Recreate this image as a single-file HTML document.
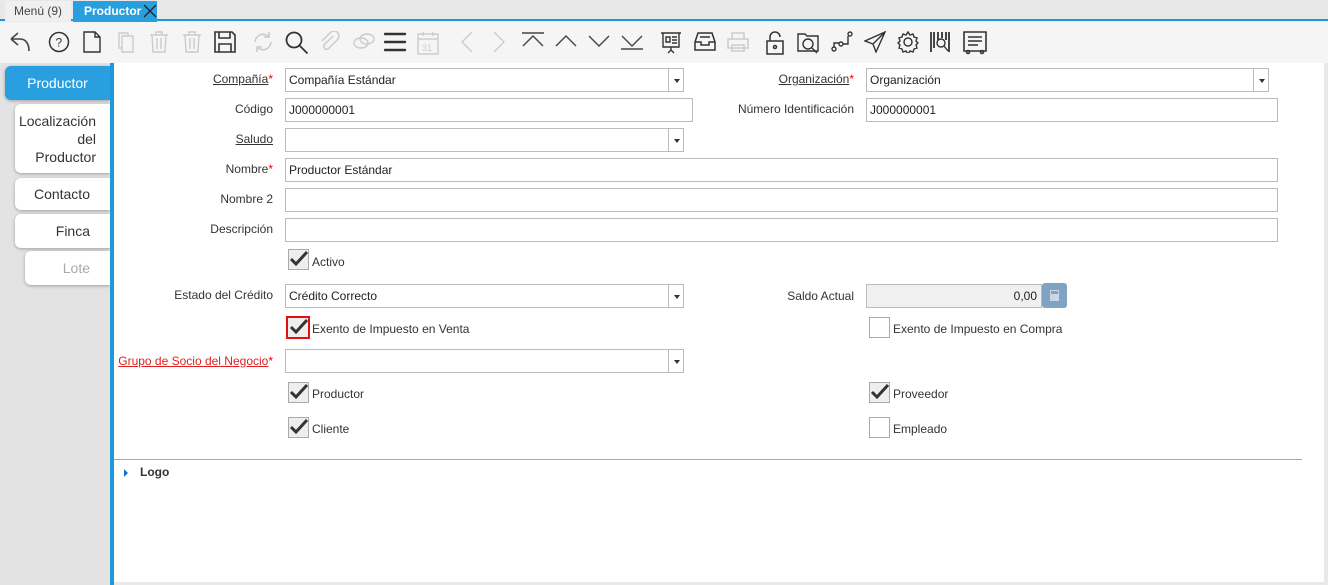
<!DOCTYPE html>
<html><head><meta charset="utf-8"><style>
*{box-sizing:border-box;margin:0;padding:0}
body{width:1328px;height:585px;overflow:hidden;background:#e9e9e9;font-family:"Liberation Sans","DejaVu Sans",sans-serif;font-size:12px;color:#333;position:relative}
.abs{position:absolute}
.tabbar{left:0;top:0;width:1328px;height:21px;background:#e8e8e8;border-bottom:2px solid #2196d8}
.t1{left:5px;top:1px;width:66px;height:20px;background:#f0f0f0;color:#444;font-size:12px;text-align:center;line-height:20px}
.t2{left:73px;top:1px;width:84px;height:21px;background:#2a9fe0;color:#fff;font-weight:bold;font-size:12px;line-height:20px;padding-left:11px}
.tb{left:0;top:22px;width:1328px;height:41px;background:#f5f5f5}
.side{left:0;top:63px;width:110px;height:522px;background:#e3e3e3}
.bl{left:110px;top:63px;width:4px;height:522px;background:#1e98dc}
.main{left:114px;top:63px;width:1210px;height:519px;background:#fff}
.vt{background:#fff;border-radius:6px 0 0 6px;box-shadow:0 1px 3px rgba(0,0,0,.3);font-size:14px;color:#333;text-align:right;padding-right:20px}
.lbl{text-align:right;font-size:12px;color:#333;white-space:nowrap}
.u{text-decoration:underline}
.req{color:#e00}
.in{background:#fff;border:1px solid #bbb;height:24px;line-height:22px;padding-left:3px;font-size:12px;color:#222}
.dd{border:1px solid #bbb;background:#fff;width:16px;height:24px}
.dd:after{content:"";position:absolute;left:5px;top:10px;border:3px solid transparent;border-top:4px solid #333}
.cb{width:21px;height:21px;border:1px solid #aaa;background:#eee}
.ck{font-size:12px}
svg.i{position:absolute;top:31px}
svg.tk{position:absolute}
</style></head><body>
<div class="abs tabbar"></div>
<div class="abs t1">Menú (9)</div>
<div class="abs t2">Productor<svg style="position:absolute;left:70px;top:3px" width="14" height="14" stroke="#222" stroke-width="1.3"><path d="M1 1l12 12M13 1L1 13"/></svg></div>
<div class="abs tb"></div>
<svg class="i" style="left:8px" width="24" height="24" fill="none" stroke="#444" stroke-width="1.6"><path d="M3 8l7-6M3 8l7 6M3 8h9c6 0 9 5 9 12"/></svg>
<svg class="i" style="left:48px" width="22" height="22" fill="none" stroke="#333" stroke-width="1.5"><circle cx="11" cy="11" r="9.5"/><text x="7.5" y="15.5" font-size="12" fill="#333" stroke="none">?</text></svg>
<svg class="i" style="left:83px" width="18" height="22" fill="none" stroke="#333" stroke-width="1.4"><path d="M1 1h11l5 5v15H1z M12 1v5h5"/></svg>
<svg class="i" style="left:116px" width="20" height="22" fill="none" stroke="#ccc" stroke-width="1.4"><path d="M6 5h11v16H6z M3 2h9v3M3 2v15h3"/></svg>
<svg class="i" style="left:149px" width="20" height="22" fill="none" stroke="#ccc" stroke-width="1.4"><path d="M1 4h18M7 4V1h6v3M3 4l1 17h12l1-17M8 7v11M12 7v11"/></svg>
<svg class="i" style="left:182px" width="20" height="22" fill="none" stroke="#ccc" stroke-width="1.4"><path d="M1 4h18M7 4V1h6v3M3 4l1 17h12l1-17M8 7v11M12 7v11"/></svg>
<svg class="i" style="left:214px" width="22" height="22" fill="none" stroke="#333" stroke-width="1.6"><path d="M1 1h17l3 3v17H1z M5 1v6h11V1 M5 13h12v8H5z"/></svg>
<svg class="i" style="left:252px" width="22" height="22" fill="none" stroke="#ccc" stroke-width="1.6"><path d="M3 11a8 8 0 0 1 14-5M19 11a8 8 0 0 1-14 5M17 1v5h-5M5 21v-5h5"/></svg>
<svg class="i" style="left:285px" width="24" height="24" fill="none" stroke="#333" stroke-width="1.8"><circle cx="9" cy="9" r="7.5"/><path d="M14.5 14.5l8 8"/></svg>
<svg class="i" style="left:319px" width="22" height="22" fill="none" stroke="#ccc" stroke-width="1.5"><path d="M14 5l-9 9a3 3 0 0 0 4 4l10-10a5 5 0 0 0-7-7L3 10"/></svg>
<svg class="i" style="left:352px" width="24" height="22" fill="none" stroke="#ccc" stroke-width="1.4"><ellipse cx="9" cy="12" rx="7" ry="5"/><ellipse cx="15" cy="8" rx="7" ry="5"/></svg>
<svg class="i" style="left:383px" width="24" height="22" fill="none" stroke="#333" stroke-width="2.4"><path d="M2 3h20M2 11h20M2 19h20" stroke-linecap="round"/></svg>
<svg class="i" style="left:417px" width="22" height="24" fill="none" stroke="#ccc" stroke-width="1.4"><path d="M1 3h20v20H1zM1 8h20M6 1v4M16 1v4"/><text x="5" y="20" font-size="9" fill="#ccc" stroke="none">31</text></svg>
<svg class="i" style="left:460px" width="14" height="22" fill="none" stroke="#ccc" stroke-width="1.4"><path d="M12 1L2 11l10 10"/></svg>
<svg class="i" style="left:492px" width="14" height="22" fill="none" stroke="#ccc" stroke-width="1.4"><path d="M2 1l10 10L2 21"/></svg>
<svg class="i" style="left:522px" width="22" height="20" fill="none" stroke="#444" stroke-width="1.4"><path d="M0 2h22M1 15l10-10 10 10"/></svg>
<svg class="i" style="left:555px" width="22" height="20" fill="none" stroke="#444" stroke-width="1.4"><path d="M1 15l10-10 10 10"/></svg>
<svg class="i" style="left:588px" width="22" height="20" fill="none" stroke="#444" stroke-width="1.4"><path d="M1 5l10 10 10-10"/></svg>
<svg class="i" style="left:621px" width="22" height="20" fill="none" stroke="#444" stroke-width="1.4"><path d="M1 5l10 10 10-10M0 18h22"/></svg>
<svg class="i" style="left:660px" width="22" height="24" fill="none" stroke="#333" stroke-width="1.4"><path d="M1 2h20M3 2v14h16V2M6 6h4v5H6zM12 6h5M12 9h5M12 12h5M11 16v4M8 22l3-3 3 3"/></svg>
<svg class="i" style="left:694px" width="22" height="22" fill="none" stroke="#333" stroke-width="1.5"><path d="M4 2h14l3 9v8H1v-8zM1 11h6v3h8v-3h6M6 6h10"/></svg>
<svg class="i" style="left:727px" width="22" height="22" fill="none" stroke="#ccc" stroke-width="1.5"><path d="M5 8V2h12v6M1 8h20v9H1zM5 14h12v6H5z"/></svg>
<svg class="i" style="left:766px" width="18" height="24" fill="none" stroke="#333" stroke-width="1.5"><path d="M4 10V6a5 5 0 0 1 10 0M1 10h16v13H1z"/><circle cx="9" cy="16" r="1.5"/></svg>
<svg class="i" style="left:797px" width="24" height="24" fill="none" stroke="#333" stroke-width="1.4"><path d="M1 3h7l2 2h11v15H1z"/><circle cx="11" cy="13" r="5"/><path d="M15 17l5 5"/></svg>
<svg class="i" style="left:831px" width="22" height="22" fill="none" stroke="#333" stroke-width="1.4"><circle cx="3" cy="18" r="2"/><circle cx="10" cy="13" r="2"/><circle cx="19" cy="3" r="2"/><path d="M3 16v-4h5M12 13h5V5"/></svg>
<svg class="i" style="left:864px" width="22" height="22" fill="none" stroke="#333" stroke-width="1.4"><path d="M21 1L1 10l8 3 3 8zM21 1L9 13"/></svg>
<svg class="i" style="left:897px" width="22" height="22" fill="none" stroke="#333" stroke-width="1.4"><circle cx="11" cy="11" r="4"/><path d="M11 1l2 3 3-1 1 3 3 1-1 3 2 2-2 2 1 3-3 1-1 3-3-1-2 3-2-3-3 1-1-3-3-1 1-3-2-2 2-2-1-3 3-1 1-3 3 1z"/></svg>
<svg class="i" style="left:930px" width="22" height="22" fill="none" stroke="#333" stroke-width="1.8"><path d="M1 1v20M4 1v16M8 1v8M12 1v6M16 1v8M19 1v20"/><circle cx="11" cy="12" r="4" stroke-width="1.4"/><path d="M14 15l4 5" stroke-width="1.4"/></svg>
<svg class="i" style="left:963px" width="24" height="24" fill="none" stroke="#333" stroke-width="1.6"><path d="M1 1h22v19H1zM5 6h14M5 10h14M5 14h10"/><circle cx="5" cy="21" r="1.5"/><circle cx="19" cy="21" r="1.5"/></svg>

<div class="abs side"></div>
<div class="abs vt" style="left:5px;top:66px;width:105px;height:34px;background:#2a9fe0;color:#fff;line-height:34px;text-align:center;padding:0;font-size:14px">Productor</div>
<div class="abs vt" style="left:15px;top:104px;width:95px;height:69px;line-height:18px;padding-top:8px;padding-right:14px">Localización<br>del<br>Productor</div>
<div class="abs vt" style="left:15px;top:178px;width:95px;height:32px;line-height:32px">Contacto</div>
<div class="abs vt" style="left:15px;top:214px;width:95px;height:34px;line-height:34px">Finca</div>
<div class="abs vt" style="left:25px;top:251px;width:85px;height:34px;line-height:34px;color:#aaa">Lote</div>
<div class="abs bl"></div>
<div class="abs main"></div>

<div class="abs lbl" style="left:120px;top:72px;width:153px"><span class="u">Compañía</span><span class="req">*</span></div>
<div class="abs in" style="left:285px;top:68px;width:384px">Compañía Estándar</div><div class="abs dd" style="left:668px;top:68px"></div>
<div class="abs lbl" style="left:700px;top:72px;width:154px"><span class="u">Organización</span><span class="req">*</span></div>
<div class="abs in" style="left:866px;top:68px;width:388px">Organización</div><div class="abs dd" style="left:1253px;top:68px"></div>

<div class="abs lbl" style="left:120px;top:102px;width:153px">Código</div>
<div class="abs in" style="left:285px;top:98px;width:408px">J000000001</div>
<div class="abs lbl" style="left:700px;top:102px;width:154px">Número Identificación</div>
<div class="abs in" style="left:866px;top:98px;width:412px">J000000001</div>

<div class="abs lbl" style="left:120px;top:132px;width:153px"><span class="u">Saludo</span></div>
<div class="abs in" style="left:285px;top:128px;width:384px"></div><div class="abs dd" style="left:668px;top:128px"></div>

<div class="abs lbl" style="left:120px;top:162px;width:153px">Nombre<span class="req">*</span></div>
<div class="abs in" style="left:285px;top:158px;width:993px">Productor Estándar</div>
<div class="abs lbl" style="left:120px;top:192px;width:153px">Nombre 2</div>
<div class="abs in" style="left:285px;top:188px;width:993px"></div>
<div class="abs lbl" style="left:120px;top:222px;width:153px">Descripción</div>
<div class="abs in" style="left:285px;top:218px;width:993px"></div>

<div class="abs cb" style="left:288px;top:249px"></div><svg class="tk" style="left:288px;top:249px" width="21" height="21"><path d="M3 10l5 5L19 3" fill="none" stroke="#333" stroke-width="3"/></svg><div class="abs ck" style="left:312px;top:255px">Activo</div>

<div class="abs lbl" style="left:120px;top:288px;width:153px">Estado del Crédito</div>
<div class="abs in" style="left:285px;top:284px;width:384px">Crédito Correcto</div><div class="abs dd" style="left:668px;top:284px"></div>
<div class="abs lbl" style="left:700px;top:289px;width:154px">Saldo Actual</div>
<div class="abs in" style="left:866px;top:284px;width:176px;background:#f0f0f0;text-align:right;padding-right:4px">0,00</div>
<div class="abs" style="left:1042px;top:283px;width:25px;height:25px;background:#7fa3c2;border-radius:3px"><div style="position:absolute;left:8px;top:7px;width:9px;height:11px;background:#c9d8e6"></div><div style="position:absolute;left:9px;top:8px;width:7px;height:3px;background:#7fa3c2"></div></div>

<div class="abs" style="left:286px;top:316px;width:24px;height:23px;border:2px solid #e01010"></div>
<div class="abs cb" style="left:288px;top:318px;width:20px;height:19px;border:none"></div><svg class="tk" style="left:288px;top:317px" width="21" height="21"><path d="M3 10l5 5L19 3" fill="none" stroke="#333" stroke-width="3"/></svg><div class="abs ck" style="left:312px;top:322px">Exento de Impuesto en Venta</div>
<div class="abs cb" style="left:869px;top:317px;background:#fff"></div><div class="abs ck" style="left:893px;top:322px">Exento de Impuesto en Compra</div>

<div class="abs lbl" style="left:80px;top:354px;width:193px;color:#e02020"><span class="u">Grupo de Socio del Negocio</span><span class="req">*</span></div>
<div class="abs in" style="left:285px;top:349px;width:384px"></div><div class="abs dd" style="left:668px;top:349px"></div>

<div class="abs cb" style="left:288px;top:382px"></div><svg class="tk" style="left:288px;top:382px" width="21" height="21"><path d="M3 10l5 5L19 3" fill="none" stroke="#333" stroke-width="3"/></svg><div class="abs ck" style="left:312px;top:387px">Productor</div>
<div class="abs cb" style="left:869px;top:382px"></div><svg class="tk" style="left:869px;top:382px" width="21" height="21"><path d="M3 10l5 5L19 3" fill="none" stroke="#333" stroke-width="3"/></svg><div class="abs ck" style="left:893px;top:387px">Proveedor</div>
<div class="abs cb" style="left:288px;top:417px"></div><svg class="tk" style="left:288px;top:417px" width="21" height="21"><path d="M3 10l5 5L19 3" fill="none" stroke="#333" stroke-width="3"/></svg><div class="abs ck" style="left:312px;top:422px">Cliente</div>
<div class="abs cb" style="left:869px;top:417px;background:#fff"></div><div class="abs ck" style="left:893px;top:422px">Empleado</div>

<div class="abs" style="left:114px;top:459px;width:1188px;height:1px;background:#aaa"></div>
<div class="abs" style="left:124px;top:469px;border:3px solid transparent;border-left:4px solid #1b6fd0;border-top-width:4px;border-bottom-width:4px"></div>
<div class="abs" style="left:140px;top:465px;font-weight:bold;font-size:12px">Logo</div>
</body></html>
